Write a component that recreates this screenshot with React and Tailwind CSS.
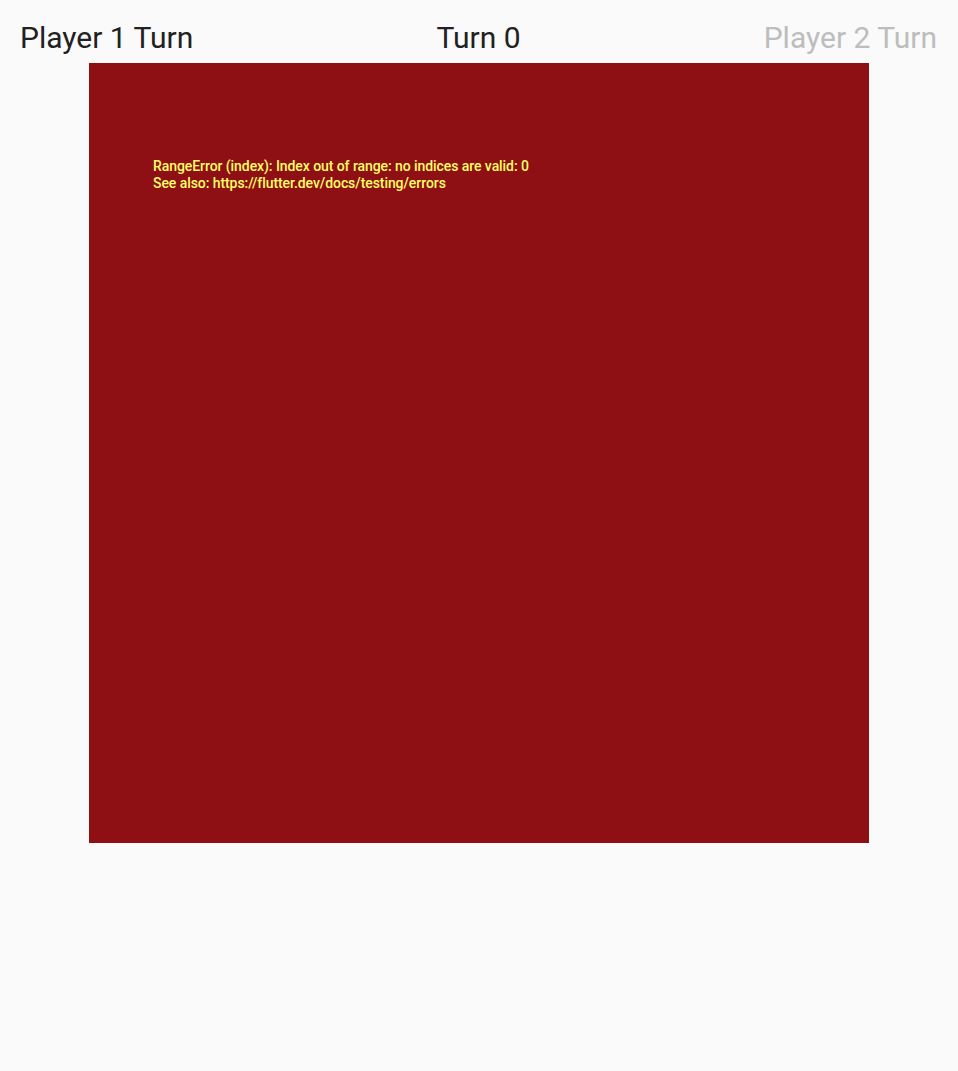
export default function App() {
  return (
    <div className="w-[958px] h-[1071px] bg-[#fafafa] flex flex-col" style={{ fontFamily: "Roboto, 'Noto Sans', sans-serif" }}>
      <div className="h-[63px] flex items-center justify-between pl-[20px] pr-[21px] pt-[12px]">
        <span className="text-[30px] leading-none text-[#212121]">Player 1 Turn</span>
        <span className="text-[30px] leading-none text-[#212121]">Turn 0</span>
        <span className="text-[30px] leading-none text-[#bdbdbd]">Player 2 Turn</span>
      </div>
      <div className="flex justify-center">
        <div className="w-[780px] h-[780px] bg-[#8e1014] pl-[64px] pt-[95px]">
          <div className="text-[#ffff66] text-[14px] leading-[17px] font-medium tracking-[-0.07px]">
            <div>RangeError (index): Index out of range: no indices are valid: 0</div>
            <div>See also: https://flutter.dev/docs/testing/errors</div>
          </div>
        </div>
      </div>
    </div>
  );
}
